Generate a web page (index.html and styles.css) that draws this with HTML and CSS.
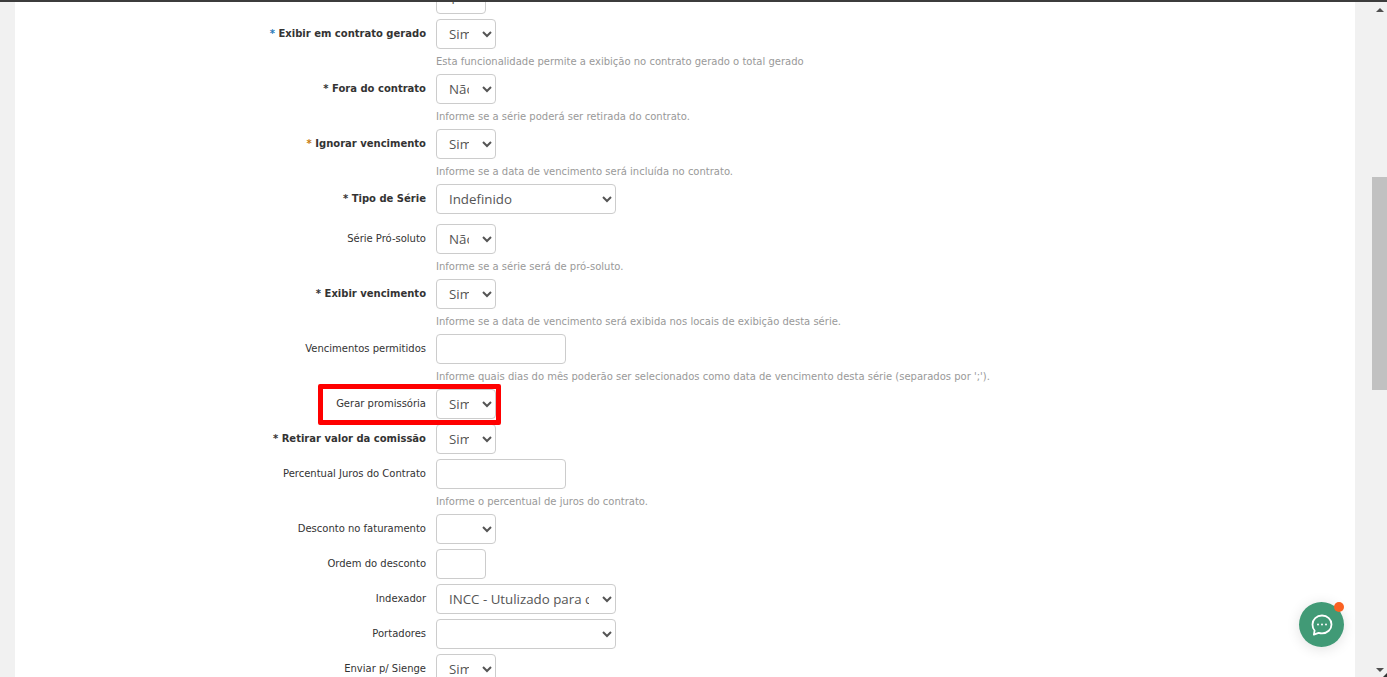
FILE: index.html
```html
<!DOCTYPE html>
<html lang="pt-BR">
<head>
<meta charset="utf-8">
<title>Série</title>
<link rel="stylesheet" href="styles.css">
</head>
<body>
<div class="topbar"></div>
<div class="stage">
  <div class="gutter-left"></div>
  <main class="content">
    <form class="form">
      <div class="row"><label class="label"></label><input class="input short" value="1"></div>
      <div class="row"><label class="label strong"><span class="star-blue">*</span> Exibir em contrato gerado</label><select class="select tiny"><option>Sim</option></select></div>
      <p class="help">Esta funcionalidade permite a exibição no contrato gerado o total gerado</p>
      <div class="row"><label class="label strong"><span class="star">*</span> Fora do contrato</label><select class="select tiny"><option>Não</option></select></div>
      <p class="help">Informe se a série poderá ser retirada do contrato.</p>
      <div class="row"><label class="label strong"><span class="star-orange">*</span> Ignorar vencimento</label><select class="select tiny"><option>Sim</option></select></div>
      <p class="help">Informe se a data de vencimento será incluída no contrato.</p>
      <div class="row row-spaced"><label class="label strong"><span class="star">*</span> Tipo de Série</label><select class="select wide"><option>Indefinido</option></select></div>
      <div class="row"><label class="label">Série Pró-soluto</label><select class="select tiny"><option>Não</option></select></div>
      <p class="help">Informe se a série será de pró-soluto.</p>
      <div class="row"><label class="label strong"><span class="star">*</span> Exibir vencimento</label><select class="select tiny"><option>Sim</option></select></div>
      <p class="help">Informe se a data de vencimento será exibida nos locais de exibição desta série.</p>
      <div class="row"><label class="label">Vencimentos permitidos</label><input class="input medium"></div>
      <p class="help">Informe quais dias do mês poderão ser selecionados como data de vencimento desta série (separados por ';').</p>
      <div class="row row-marked"><div class="marker"></div><label class="label">Gerar promissória</label><select class="select tiny"><option>Sim</option></select></div>
      <div class="row"><label class="label strong"><span class="star">*</span> Retirar valor da comissão</label><select class="select tiny"><option>Sim</option></select></div>
      <div class="row"><label class="label">Percentual Juros do Contrato</label><input class="input medium"></div>
      <p class="help">Informe o percentual de juros do contrato.</p>
      <div class="row"><label class="label">Desconto no faturamento</label><select class="select tiny"><option></option></select></div>
      <div class="row"><label class="label">Ordem do desconto</label><input class="input short"></div>
      <div class="row"><label class="label">Indexador</label><select class="select wide"><option>INCC - Utulizado para correção</option></select></div>
      <div class="row"><label class="label">Portadores</label><select class="select wide"><option></option></select></div>
      <div class="row"><label class="label">Enviar p/ Sienge</label><select class="select tiny"><option>Sim</option></select></div>
    </form>
  </main>
  <div class="gutter-right"></div>
  <div class="scrollbar">
    <div class="scroll-btn"><span class="arrow-up"></span></div>
    <div class="scroll-track">
      <div class="scroll-thumb"></div>
    </div>
    <div class="scroll-btn"><span class="arrow-down"></span></div>
  </div>
</div>
<button class="chat" type="button" aria-label="Chat">
  <svg class="chat-icon" width="24" height="24" viewBox="0 0 24 24" fill="none">
    <path d="M12 2.5c5.4 0 9.5 3.900 9.500 8.900s-4.100 8.900-9.500 8.900c-1.200 0-2.300-.2-3.400-.5l-4.700 1.800.7-4.100c-1.500-1.600-2.100-3.600-2.100-6.100 0-5 4.100-8.900 9.500-8.900z" stroke="#fff" stroke-width="1.800" stroke-linejoin="round"/>
    <circle cx="8" cy="11.500" r="1" fill="#fff"/><circle cx="12" cy="11.500" r="1" fill="#fff"/><circle cx="16" cy="11.500" r="1" fill="#fff"/>
  </svg>
  <span class="chat-dot"></span>
</button>
<div class="corner"></div>
</body>
</html>
```
FILE: styles.css
```css
* { box-sizing: border-box; }
html, body { margin: 0; height: 100%; overflow: hidden; background: #fff; }
body { display: flex; flex-direction: column; font-family: "DejaVu Sans", Verdana, sans-serif; font-size: 10px; color: #333; }
.topbar { height: 2px; background: #3c3c3c; flex: none; }
.stage { flex: 1; display: flex; min-height: 0; }
.gutter-left { width: 15px; background: #f1f1f1; flex: none; }
.content { flex: 1; min-width: 0; background: #fff; overflow: hidden; }
.gutter-right { width: 17px; background: #f1f1f1; flex: none; }
.scrollbar { width: 15px; background: #f1f1f1; flex: none; display: flex; flex-direction: column; }
.scroll-btn { height: 15px; display: flex; align-items: center; justify-content: center; flex: none; }
.arrow-up { border: 4px solid transparent; border-top: 0; border-bottom: 4px solid #505050; }
.arrow-down { border: 4px solid transparent; border-bottom: 0; border-top: 4px solid #505050; }
.scroll-track { flex: 1; padding-top: 160px; }
.scroll-thumb { height: 213px; background: #c1c1c1; }
.form { margin-top: -18px; padding-left: 0; }
.row { display: flex; align-items: flex-start; height: 35px; gap: 10px; position: relative; }
.row-spaced { height: 40px; }
.label { width: 411px; flex: none; text-align: right; line-height: 13px; padding-top: 8px; color: #333; }
.strong { font-weight: 700; }
.star { color: #333; }
.star-blue { color: #2a7ab8; }
.star-orange { color: #c77a10; }
.select, .input { height: 30px; background: #fff; border: 1px solid #ccc; border-radius: 4px; font-family: "Open Sans", sans-serif; font-size: 13.3px; color: #555; flex: none; }
.select { padding: 0 10px 0 8px; }
.tiny { width: 60px; }
.wide { width: 180px; }
.input { padding: 0 12px; }
.short { width: 50px; }
.medium { width: 130px; }
.help { margin: 0 0 0 421px; height: 20px; line-height: 13px; padding-top: 1px; color: #999; font-size: 10px; }
.row-marked { z-index: 1; }
.marker { position: absolute; left: 303px; top: -5px; width: 183px; height: 41px; border: 5px solid #f00; border-radius: 2px; pointer-events: none; }
.chat { position: fixed; left: 1299px; top: 602px; width: 45px; height: 45px; border: 0; padding: 0; border-radius: 50%; background: #419a76; box-shadow: 0 2px 14px rgba(0,0,0,.12); display: flex; align-items: center; justify-content: center; }
.chat-dot { position: absolute; top: 0; right: 0; width: 10px; height: 10px; border-radius: 50%; background: #fa6122; }
.corner { position: fixed; right: 0; bottom: 0; width: 0; height: 0; border-left: 4px solid transparent; border-bottom: 4px solid #333; }
```
